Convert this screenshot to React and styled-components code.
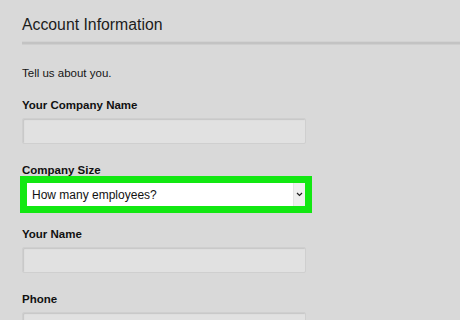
import styled, { createGlobalStyle } from 'styled-components';

const Global = createGlobalStyle`
    body {
        margin: 0;
        background: #d9d9d9;
        font-family: "Liberation Sans", Arial, sans-serif;
        color: #151515;
    }
`;

const fields = [
    { label: 'Your Company Name' },
    { label: 'Company Size', select: 'How many employees?' },
    { label: 'Your Name' },
    { label: 'Phone' },
];

const App = () => {
    return (
        <>
            <Global />
            <Page>
                <Title>Account Information</Title>
                <Divider />
                <Intro>Tell us about you.</Intro>
                <Form>
                    {fields.map((f) => (
                        <Field key={f.label}>
                            <Label>{f.label}</Label>
                            {f.select ? (
                                <Select>
                                    <SelectText>{f.select}</SelectText>
                                    <Arrow>
                                        <svg width="7" height="5" viewBox="0 0 7 5">
                                            <polyline points="1,1 3.5,3.5 6,1" fill="none" stroke="#222" strokeWidth="1.2" />
                                        </svg>
                                    </Arrow>
                                </Select>
                            ) : (
                                <Input />
                            )}
                        </Field>
                    ))}
                </Form>
            </Page>
        </>
    );
};

const Page = styled.div`
    height: 320px;
    overflow: hidden;
    padding-left: 22px;
`;

const Title = styled.h1`
    margin: 0;
    padding-top: 15px;
    font-size: 15.8px;
    line-height: 20px;
    font-weight: normal;
    color: #1c1c1c;
`;

const Divider = styled.div`
    margin-top: 7px;
    height: 2px;
    background: #c3c3c3;
    box-shadow: 0 1px 0 #cecece, 0 -1px 0 #d2d2d2;
`;

const Intro = styled.p`
    margin: 22px 0 0;
    font-size: 11.5px;
    line-height: 14px;
`;

const Form = styled.div`
    display: flex;
    flex-direction: column;
    gap: 19px;
    margin-top: 18px;
`;

const Field = styled.div`
    display: flex;
    flex-direction: column;
    gap: 6px;
`;

const Label = styled.div`
    font-size: 11.5px;
    line-height: 14px;
    font-weight: bold;
    color: #111;
`;

const Input = styled.div`
    box-sizing: border-box;
    width: 284px;
    height: 26px;
    background: #e1e1e1;
    border: 1px solid #cfcfcf;
    border-radius: 2px;
    box-shadow: inset 1px 1px 1px rgba(0, 0, 0, 0.12);
`;

const Select = styled.div`
    box-sizing: border-box;
    display: flex;
    align-items: center;
    width: 278px;
    height: 23px;
    margin-left: 5px;
    margin-bottom: 2px;
    background: #fff;
    outline: 7px solid #12e812;
`;

const SelectText = styled.span`
    flex: 1;
    padding-left: 5px;
    font-size: 12px;
    color: #111;
`;

const Arrow = styled.span`
    display: flex;
    align-items: center;
    justify-content: center;
    width: 11px;
    height: 100%;
    background: #efefef;
    border-left: 1px solid #e4e4e4;
`;

export default App;
